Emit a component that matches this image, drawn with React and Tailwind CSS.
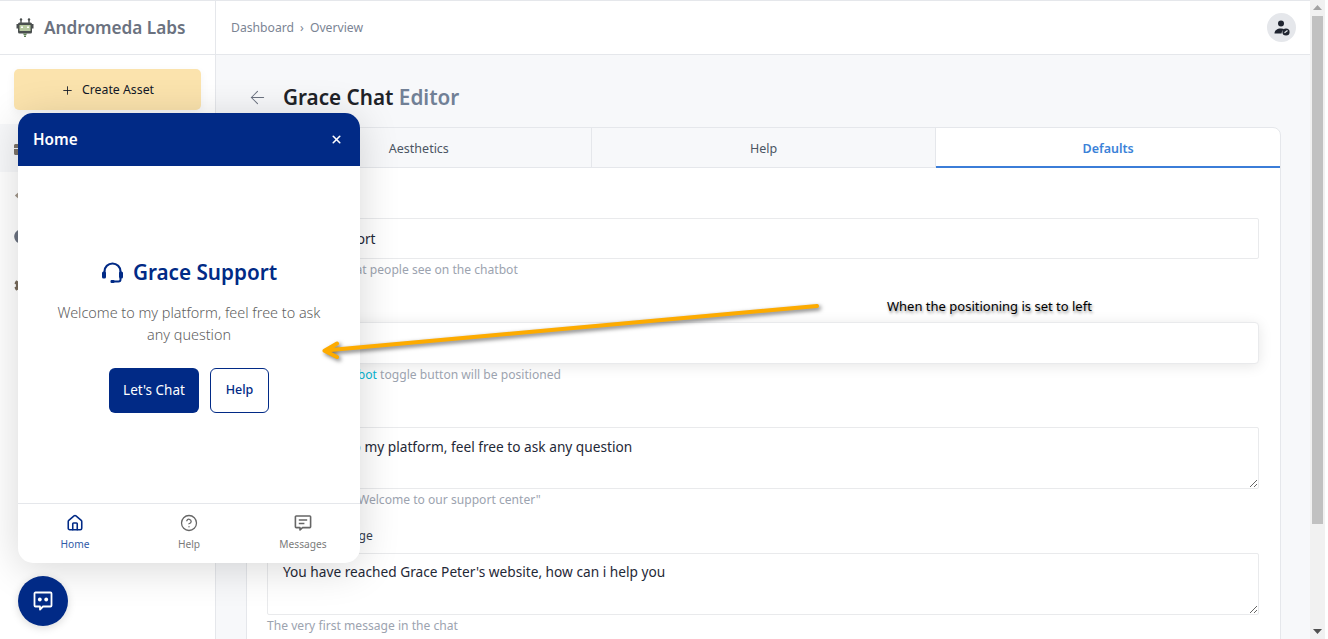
import React from "react";
import { CircleHelp, ArrowLeft, Plus, X, Home as HomeIcon } from "lucide-react";
import { FaBriefcase, FaCircle, FaCog, FaCode } from "react-icons/fa";

function RobotLogo() {
  return (
    <svg width="18" height="20" viewBox="0 0 18 20" className="shrink-0">
      <path d="M5 1v4M13 1v4" stroke="#4a4f4f" strokeWidth="1.4" />
      <circle cx="5" cy="1.4" r="1.2" fill="#4a4f4f" />
      <circle cx="13" cy="1.4" r="1.2" fill="#4a4f4f" />
      <rect x="0.5" y="6" width="17" height="4.5" fill="#4a4f4f" />
      <rect x="2" y="4.5" width="14" height="11" rx="1.5" fill="#4a4f4f" />
      <rect x="3.5" y="7" width="11" height="6" fill="#b7c9a0" />
      <rect x="5" y="8.5" width="2" height="1.5" fill="#fff" />
      <rect x="11" y="8.5" width="2" height="1.5" fill="#fff" />
      <path d="M7 15.5h4l-1 2H8zM8 18h2v1H8z" fill="#5f7f55" />
    </svg>
  );
}

function Headset() {
  return (
    <svg width="23" height="23" viewBox="0 0 23 23" fill="none" className="shrink-0">
      <path d="M3.5 13V10.5a8 8 0 0 1 16 0V13" stroke="#012a86" strokeWidth="2.2" />
      <rect x="1" y="10.5" width="4" height="7" rx="1.6" fill="#012a86" />
      <rect x="18" y="10.5" width="4" height="7" rx="1.6" fill="#012a86" />
      <path d="M19.5 17v1.5a2 2 0 0 1-2 2h-5" stroke="#012a86" strokeWidth="2" />
      <rect x="9.5" y="19" width="4" height="3" rx="1" fill="#012a86" />
    </svg>
  );
}

function UserBadge() {
  return (
    <svg width="18" height="18" viewBox="0 0 18 18">
      <circle cx="8" cy="4.5" r="3" fill="#1f2430" />
      <path d="M1.5 14.5c0-3 2.5-5 6.5-5 1.4 0 2.6.2 3.5.7-1.6.7-2.8 2.2-2.9 4.3z" fill="#1f2430" />
      <circle cx="13" cy="13" r="3.6" fill="#1f2430" />
      <path d="M11.5 13.8l3-2.3" stroke="#e5e7eb" strokeWidth="1.2" />
    </svg>
  );
}

function ChatToggleIcon() {
  return (
    <svg width="20" height="20" viewBox="0 0 20 20" fill="none">
      <path d="M2.5 1.5h15a1 1 0 0 1 1 1v12a1 1 0 0 1-1 1H10l-3 3v-3H2.5a1 1 0 0 1-1-1v-12a1 1 0 0 1 1-1z" stroke="#fff" strokeWidth="1.8" strokeLinejoin="round" />
      <circle cx="6.8" cy="8.5" r="1.9" fill="#fff" />
      <circle cx="13.2" cy="8.5" r="1.9" fill="#fff" />
    </svg>
  );
}

function MessagesIcon() {
  return (
    <svg width="18" height="18" viewBox="0 0 18 18" fill="none" stroke="#666" strokeWidth="1.6">
      <path d="M2.2 2h13.6a.8.8 0 0 1 .8.8v10a.8.8 0 0 1-.8.8H8.5l-2.5 2.4v-2.4H2.2a.8.8 0 0 1-.8-.8v-10a.8.8 0 0 1 .8-.8z" strokeLinejoin="round" />
      <path d="M4.8 6h8.4M4.8 9.5h5.6" />
    </svg>
  );
}

function Field({ label, hint, children, className = "mb-4" }) {
  return (
    <div className={className}>
      <label className="block h-5 mb-[7px] text-[12.1px] leading-5 text-[#374151]">{label}</label>
      {children}
      <p className="h-5 pt-px text-[12.1px] leading-5 text-[#9ca3af] whitespace-nowrap">{hint}</p>
    </div>
  );
}

const inputCls = "block w-full border border-[#e9eaec] bg-white px-[15px] text-[13.7px] text-[#1f2937] outline-none rounded-[2px]";

export default function App() {
  return (
    <div className="relative flex h-[639px] w-full overflow-hidden bg-white font-['Noto_Sans',sans-serif]">
      <div className="flex flex-col w-[1310px] h-full border-t border-[#e5e7eb]">
        <header className="flex h-[54px] shrink-0 border-b border-[#e5e7eb] bg-white">
          <div className="flex items-center gap-[10px] w-[216px] pl-[16px] border-r border-[#e5e7eb]">
            <RobotLogo />
            <span className="text-[17.2px] font-semibold text-[#6b7280]">Andromeda Labs</span>
          </div>
          <div className="flex flex-1 items-center justify-between pl-[15px] pr-[14px]">
            <div className="flex items-center gap-[6px] pt-[2px] text-[12.2px] text-[#7b8494]">
              <span>Dashboard</span><span>›</span><span>Overview</span>
            </div>
            <div className="flex items-center justify-center w-[29px] h-[29px] rounded-full bg-[#e5e7eb]">
              <UserBadge />
            </div>
          </div>
        </header>
        <div className="flex flex-1 min-h-0">
          <aside className="w-[216px] shrink-0 border-r border-[#e5e7eb] bg-white pt-[14px]">
            <div className="mx-[14px] flex h-[41px] items-center justify-center gap-[8px] pt-[2px] rounded-[5px] bg-[#fbe3ad] text-[12.3px] text-[#111827] shadow-[0_3px_10px_rgba(0,0,0,0.05)]">
              <Plus size={13} strokeWidth={1.6} />
              <span>Create Asset</span>
            </div>
            <div className="mt-[14px]">
              <div className="flex items-center h-[48px] pl-[14px] bg-[#f7f8fa]"><FaBriefcase size={16} color="#7d7469" /></div>
              <div className="flex items-center h-[46px] pl-[15px]"><FaCode size={15} color="#7a6a58" className="opacity-70" /></div>
              <div className="flex items-center h-[36px] pl-[14px]"><FaCircle size={15} color="#6b7280" /></div>
              <div className="flex items-center h-[62px] pl-[14px]"><FaCog size={15} color="#776a5b" /></div>
            </div>
          </aside>
          <main className="flex-1 min-w-0 bg-[#f7f8fa] pt-[28px] pl-[30px] pr-[29px]">
            <div className="flex h-[28px] mb-[16px] items-center">
              <ArrowLeft size={21} strokeWidth={1.2} className="text-[#6b7280] ml-[1px] mr-[15px]" />
              <h1 className="text-[20.7px] font-semibold leading-7 text-[#1f2328]">
                Grace Chat <span className="text-[#718096]">Editor</span>
              </h1>
            </div>
            <div className="rounded-t-[8px] border border-[#e5e7eb] bg-white">
              <div className="flex h-[40px] text-[12.5px]">
                <div className="flex flex-1 items-center justify-center pt-[4px] rounded-tl-[8px] border-b border-r border-[#e5e7eb] bg-[#f7f8fa] text-[#4b5563]">Aesthetics</div>
                <div className="flex flex-1 items-center justify-center pt-[4px] border-b border-r border-[#e5e7eb] bg-[#f7f8fa] text-[#4b5563]">Help</div>
                <div className="flex flex-1 items-center justify-center pt-[4px] border-b-2 border-[#3b7dd8] font-semibold text-[#3b82d8]">Defaults</div>
              </div>
              <div className="pt-[23px] pl-[20px] pr-[21px]">
                <Field hint="The chat title that people see on the chatbot">
                  <input readOnly value="Grace Support" className={`${inputCls} h-[41px]`} />
                </Field>
                <Field hint={<>Where that chat<span className="text-[#06b6d4]">bot</span> toggle button will be positioned</>}>
                  <input readOnly value="Left" className={`${inputCls} h-[42px] border-[#d8dbe1] rounded-[4px] shadow-[0_2px_14px_rgba(0,0,0,0.1)]`} />
                </Field>
                <Field className="mb-[17px]" hint={'Example titles: "Welcome to our support center"'}>
                  <textarea readOnly value="Welcome to my platform, feel free to ask any question" className={`${inputCls} h-[62px] py-[9px] indent-[2px] leading-5 resize-y`} />
                </Field>
                <Field label="Welcome Message" hint="The very first message in the chat">
                  <textarea readOnly value="You have reached Grace Peter's website, how can i help you" className={`${inputCls} h-[62px] py-[8px] leading-5 resize-y`} />
                </Field>
              </div>
            </div>
          </main>
        </div>
      </div>

      <div className="flex flex-col items-center justify-between w-[15px] h-full bg-[#f1f1f1] py-[5px]">
        <svg width="9" height="5" viewBox="0 0 9 5" className="shrink-0"><path d="M4.5 0L9 5H0z" fill="#a3a3a3" /></svg>
        <div className="w-[11px] h-[508px] bg-[#c1c1c1] mt-[6px] mb-auto shrink-0" />
        <svg width="9" height="5" viewBox="0 0 9 5" className="shrink-0"><path d="M0 0h9L4.5 5z" fill="#505050" /></svg>
      </div>

      {/* chat widget overlay */}
      <div className="absolute left-[18px] top-[113px] flex h-[450px] w-[342px] flex-col rounded-[15px] bg-white shadow-[0_5px_40px_rgba(0,0,0,0.16)]">
        <div className="flex h-[53px] shrink-0 items-center justify-between rounded-t-[15px] bg-[#012a86] pb-[1px] pl-[15px] pr-[17px] text-white">
          <span className="text-[15.3px] font-semibold">Home</span>
          <X size={13} strokeWidth={3} />
        </div>
        <div className="flex flex-1 flex-col items-center pt-[92px]">
          <div className="flex items-center gap-[9px]">
            <Headset />
            <span className="text-[20.7px] font-semibold leading-7 text-[#012a86]">Grace Support</span>
          </div>
          <p className="mt-[16px] w-[280px] text-center text-[14.4px] leading-[22px] font-light text-[#5f5f5f]">
            Welcome to my platform, feel free to ask any question
          </p>
          <div className="mt-[22px] flex gap-[11px]">
            <div className="flex h-[45px] w-[90px] items-center justify-center rounded-[6px] bg-[#012a86] text-[13.5px] text-white">Let's Chat</div>
            <div className="flex h-[45px] w-[59px] items-center justify-center rounded-[6px] border border-[#012a86] text-[12.5px] font-medium text-[#012a86]">Help</div>
          </div>
        </div>
        <div className="grid h-[60px] shrink-0 grid-cols-3 border-t border-[#e5e7eb] text-[10.2px] text-[#7b7b7b]">
          <div className="flex flex-col items-center pt-[10px] text-[#012a86]">
            <HomeIcon size={18} strokeWidth={2.1} />
            <span className="mt-[4px] leading-4 text-[#2f5aa8]">Home</span>
          </div>
          <div className="flex flex-col items-center pt-[10px]">
            <CircleHelp size={18} strokeWidth={1.7} className="text-[#666]" />
            <span className="mt-[4px] leading-4">Help</span>
          </div>
          <div className="flex flex-col items-center pt-[10px]">
            <MessagesIcon />
            <span className="mt-[4px] leading-4">Messages</span>
          </div>
        </div>
      </div>

      {/* chat toggle */}
      <div className="absolute left-[18px] top-[576px] flex h-[50px] w-[50px] items-center justify-center rounded-full bg-[#012a86] shadow-[0_2px_8px_rgba(0,0,0,0.15)]">
        <ChatToggleIcon />
      </div>

      {/* annotation */}
      <svg className="absolute left-0 top-0 pointer-events-none drop-shadow-[2px_2px_2px_rgba(0,0,0,0.55)]" width="1000" height="400" fill="none">
        <path d="M817 306L325 350.5M337 343.5L324.5 350.8L337 357" stroke="#fdab00" strokeWidth="4" strokeLinecap="round" strokeLinejoin="round" />
      </svg>
      <span className="absolute left-[887px] top-[297px] text-[13px] leading-[18px] text-black [text-shadow:1px_2px_3px_rgba(0,0,0,0.45)]">When the positioning is set to left</span>
    </div>
  );
}
